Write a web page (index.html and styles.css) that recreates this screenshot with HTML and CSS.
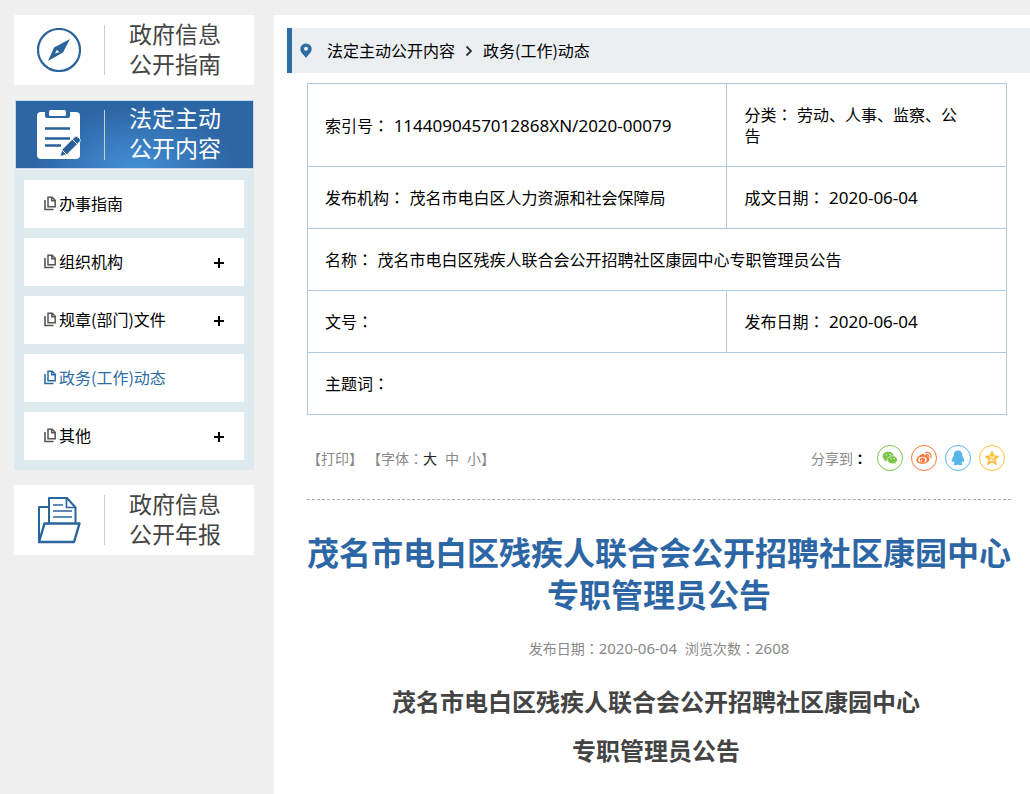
FILE: index.html
```html
<!DOCTYPE html>
<html lang="zh-CN">
<head>
<meta charset="utf-8">
<meta name="viewport" content="width=device-width, initial-scale=1">
<title>茂名市电白区残疾人联合会公开招聘社区康园中心专职管理员公告</title>
<link rel="stylesheet" href="styles.css">
</head>
<body>
<svg class="sprite" aria-hidden="true">
  <symbol id="pages" viewBox="0 0 13 15">
    <path d="M1 4v9.500h8.500" fill="none" stroke="currentColor" stroke-width="1.600"/>
    <path d="M4 1.300h4.200l3 3v6.500H4zM7.800 1.300v3.400h3.400" fill="none" stroke="currentColor" stroke-width="1.500"/>
  </symbol>
</svg>
<div class="page">
  <aside class="sidebar">
    <a class="card" href="#guide">
      <svg class="card-icon" viewBox="0 0 44 44" aria-hidden="true">
        <circle cx="22" cy="22" r="21" fill="none" stroke="#2a649c" stroke-width="2.200"/>
        <path fill="#2a649c" fill-rule="evenodd" d="M33 11 26 24.500 11 33l6-13.500zM20.500 20.800 18 25.600l4.800-1.700z"/>
        <path fill="#2a649c" d="m18.500 20.500 5 4.500 1-2-4-3.500z"/>
      </svg>
      <span class="card-text">政府信息<br>公开指南</span>
    </a>
    <section>
      <a class="card active" href="#content">
        <svg class="card-icon tall" viewBox="0 0 44 50" aria-hidden="true">
          <rect x="0" y="2" width="43" height="47" rx="4" fill="#fff"/>
          <path fill="#2d66a5" d="M8 2h25v4q0 2-2 2H10q-2 0-2-2z"/>
          <rect x="12" y="0" width="17" height="6" rx="1.500" fill="#fff"/>
          <path d="M8 18.500h25M8 28.500h25M8 35.500h16" stroke="#2a6098" stroke-width="2.600"/>
          <path fill="#2a6098" stroke="#fff" stroke-width=".8" d="m23 46.500 2-7L37.500 27q2-1.500 4 .5l1.500 1.500q1 2-.5 3L30 44.500z"/>
          <path d="m35 29 5.500 5.500M25 40l4 4" stroke="#fff"/>
        </svg>
        <span class="card-text">法定主动<br>公开内容</span>
      </a>
      <ul class="submenu">
        <li><a href="#a"><svg class="pages"><use href="#pages"/></svg>办事指南</a></li>
        <li><a href="#b"><svg class="pages"><use href="#pages"/></svg>组织机构</a><button class="plus" aria-label="展开组织机构"></button></li>
        <li><a href="#c"><svg class="pages"><use href="#pages"/></svg>规章(部门)文件</a><button class="plus" aria-label="展开规章文件"></button></li>
        <li><a class="current" href="#d"><svg class="pages"><use href="#pages"/></svg>政务(工作)动态</a></li>
        <li><a href="#e"><svg class="pages"><use href="#pages"/></svg>其他</a><button class="plus" aria-label="展开其他"></button></li>
      </ul>
    </section>
    <a class="card" href="#report">
      <svg class="card-icon tall" viewBox="0 0 44 50" aria-hidden="true">
        <g fill="none" stroke="#2a649c" stroke-width="2" stroke-linejoin="round">
          <path d="M11 12H2v34.500M12 28V3h18l8.500 9.500V28"/>
          <path d="M7.500 28.500H42.500L37 47H2z" stroke-width="2.400"/>
          <path d="M29.500 3v9.500h9M16 10h10M16 16h19M16 22h19" stroke-width="1.700"/>
        </g>
      </svg>
      <span class="card-text">政府信息<br>公开年报</span>
    </a>
  </aside>

  <main class="main">
    <nav class="crumbs" aria-label="当前位置">
      <svg class="pin" viewBox="0 0 12 16" aria-hidden="true"><path fill="#2e6da4" fill-rule="evenodd" d="M6 .500a5.600 5.600 0 0 1 5.700 5.600C11.700 9.500 8.500 11.500 6 15 3.500 11.500.300 9.500.300 6.100A5.600 5.600 0 0 1 6 .500zm0 3.300a2 2 0 1 0 0 4 2 2 0 0 0 0-4z"/></svg>
      <a href="#content">法定主动公开内容</a>
      <svg class="chevron" viewBox="0 0 8 12" aria-hidden="true"><path d="m1.500 1.500 4.500 4.500-4.500 4.500" fill="none" stroke="#333" stroke-width="1.800"/></svg>
      <a href="#d">政务(工作)动态</a>
    </nav>

    <article class="article">
      <table class="info">
        <colgroup><col class="col-wide"><col></colgroup>
        <tr><td>索引号<span class="colon" lang="ja">：</span> <span class="num">1144090457012868XN/2020-00079</span></td><td>分类<span class="colon" lang="ja">：</span> 劳动、人事、监察、公告</td></tr>
        <tr><td>发布机构<span class="colon" lang="ja">：</span> 茂名市电白区人力资源和社会保障局</td><td>成文日期<span class="colon" lang="ja">：</span> <span class="num">2020-06-04</span></td></tr>
        <tr><td colspan="2">名称<span class="colon" lang="ja">：</span> 茂名市电白区残疾人联合会公开招聘社区康园中心专职管理员公告</td></tr>
        <tr><td>文号<span class="colon" lang="ja">：</span></td><td>发布日期<span class="colon" lang="ja">：</span> <span class="num">2020-06-04</span></td></tr>
        <tr><td colspan="2">主题词<span class="colon" lang="ja">：</span></td></tr>
      </table>

      <div class="tools">
        <div class="tool-group">
          <span>【<button>打印</button>】</span>
          <span class="sizes">【字体<span class="colon" lang="ja">：</span><button class="chosen">大</button><button>中</button><button>小</button>】</span>
        </div>
        <div class="share">
          <span>分享到<b class="colon" lang="ja">：</b></span>
          <a class="round wechat" href="#wechat" aria-label="微信"><svg viewBox="0 0 20 20"><g fill="currentColor"><path d="M8 3C4.400 3 1.800 5.200 1.800 8c0 1.700 1 3 2.200 3.900l-.5 1.900 2.300-1.100c.7.200 1.400.3 2.200.3 3.600 0 6.200-2.200 6.200-5S11.600 3 8 3z"/><path stroke="#fff" stroke-width=".7" d="M12.700 7.500c-3.200 0-5.500 2-5.500 4.500s2.300 4.500 5.500 4.500c.7 0 1.300-.1 1.900-.3l2.200 1-.6-1.900c1.200-.8 2-2 2-3.300 0-2.500-2.400-4.500-5.500-4.500z"/></g><g fill="#fff"><circle cx="6" cy="6.500" r=".8"/><circle cx="10" cy="6" r=".8"/><circle cx="11" cy="10.800" r=".7"/><circle cx="14.500" cy="10.800" r=".7"/></g></svg></a>
          <a class="round weibo" href="#weibo" aria-label="微博"><svg viewBox="0 0 20 20"><path fill="currentColor" d="M8 5.500c1.500-.7 2.800-.2 2.600 1.600 2.400-.8 4-.1 3.500 1.700 1.300.4 2 1.200 2 2.400 0 2.900-3.500 5.300-7.500 5.300S1.500 14.800 1.500 12.200C1.500 9.800 5 6.700 8 5.500z"/><ellipse cx="8.400" cy="12" rx="4.800" ry="3.300" fill="#fff"/><circle cx="8.300" cy="12.300" r="2.900" fill="currentColor"/><circle cx="7.300" cy="12.900" r="1" fill="#fff"/><path d="M12 3.800c3.800-.7 6.500 2 5.800 5.700M12.500 6.300c1.900-.4 3.100.9 2.800 2.500" fill="none" stroke="currentColor" stroke-width="1.300" stroke-linecap="round"/></svg></a>
          <a class="round qq" href="#qq" aria-label="QQ"><svg viewBox="0 0 20 20"><path fill="currentColor" d="M10 1.800c-3 0-4.700 2-4.700 5 0 1-.2 1.600-.8 2.500-1.100 1.600-1.700 3.300-1.300 5 .3.500 1 .1 1.800-1 .2 1 .7 1.800 1.300 2.400-1.100.4-1.500 1.300-.9 1.800.8.600 3 .6 4.600-.2 1.600.8 3.800.8 4.600.2.600-.5.200-1.400-.9-1.800.6-.6 1.100-1.400 1.300-2.400.8 1.100 1.500 1.500 1.800 1 .4-1.700-.2-3.400-1.300-5-.6-.9-.8-1.500-.8-2.500 0-3-1.700-5-4.700-5z"/></svg></a>
          <a class="round qzone" href="#qzone" aria-label="QQ空间"><svg viewBox="0 0 20 20"><path fill="currentColor" stroke="currentColor" stroke-linejoin="round" d="m10 2.500 2.300 5 5.500.6-4.200 3.700 1.300 5.500-4.900-2.900-4.900 2.900 1.300-5.500L2.200 8.100l5.500-.6z"/><path d="M7 9q3-.6 5.600 0L7.600 12.600q3 .5 5.500-.1" fill="none" stroke="#fff" stroke-width="1"/></svg></a>
        </div>
      </div>

      <h1 class="title">茂名市电白区残疾人联合会公开招聘社区康园中心专职管理员公告</h1>
      <p class="meta"><span>发布日期<span class="colon" lang="ja">：</span><span class="num">2020-06-04</span></span><span>浏览次数<span class="colon" lang="ja">：</span><span class="num">2608</span></span></p>
      <div class="body-text">
        <p>茂名市电白区残疾人联合会公开招聘社区康园中心</p>
        <p>专职管理员公告</p>
      </div>
    </article>
  </main>
</div>
</body>
</html>
```
FILE: styles.css
```css
* { box-sizing: border-box; }
body {
  margin: 0;
  background: #f0f0f0;
  color: #000;
  font: 16px/21px "Noto Sans CJK SC", sans-serif;
  text-spacing-trim: space-all;
}
a { color: inherit; text-decoration: none; }
button {
  padding: 0;
  border: 0;
  background: none;
  color: inherit;
  font: inherit;
  cursor: pointer;
}
p, ul, h1 { margin: 0; padding: 0; }
svg { display: block; flex: none; }
.sprite { position: absolute; width: 0; height: 0; }
.colon { font-family: "Noto Sans CJK JP", sans-serif; }
.num { font-family: "Noto Sans", sans-serif; font-size: 17px; }

.page {
  display: flex;
  gap: 20px;
  min-height: 100vh;
  padding: 15px 0 0 14px;
}

/* Sidebar */
.sidebar {
  display: flex;
  flex-direction: column;
  gap: 15px;
  flex: none;
  width: 240px;
}
.card {
  display: flex;
  align-items: center;
  height: 70px;
  padding-left: 23px;
  background: #fff;
  color: #444;
}
.card-icon { width: 44px; height: 44px; }
.card-icon.tall { height: 50px; }
.card-text {
  display: flow-root;
  margin-left: 23px;
  padding: 0 0 5px 25px;
  background: linear-gradient(#ccc, #ccc) left center / 1px 50px no-repeat;
  font-size: 23px;
  line-height: 30px;
}
.card.active {
  height: 69px;
  margin: 0 0 1px 1px;
  padding-left: 21px;
  border: 1px solid #c3d8ea;
  background: radial-gradient(ellipse 100px 60px at 50% 100%, #438fd5, #2d66a5);
  color: #fff;
}
.submenu {
  display: flex;
  flex-direction: column;
  gap: 10px;
  padding: 10px;
  background: #dfeaee;
  list-style: none;
}
.submenu li {
  display: flex;
  align-items: center;
  justify-content: space-between;
  height: 48px;
  padding: 0 20px 2px;
  background: #fff;
}
.submenu a { display: flex; align-items: center; gap: 2px; }
.submenu .current { color: #2e6da4; }
.pages { width: 13px; height: 15px; color: #555; }
.current .pages { color: #2e6da4; }
.plus {
  width: 10px;
  height: 14px;
  background:
    linear-gradient(#000, #000) center 8px / 10px 2px no-repeat,
    linear-gradient(#000, #000) center bottom / 2px 10px no-repeat;
}

/* Main column */
.main {
  flex: 1;
  min-width: 0;
  padding: 13px 0 0 13px;
  background: #fff;
}
.crumbs {
  display: flex;
  align-items: center;
  height: 45px;
  padding-left: 8px;
  border-left: 5px solid #2e6da4;
  background: #ebeff2;
}
.pin { width: 12px; height: 16px; margin-right: 15px; }
.chevron { width: 8px; height: 12px; margin: 0 10px; }
.article { padding: 10px 19px 20px 20px; }

.info {
  width: calc(100% - 4px);
  border-collapse: collapse;
  table-layout: fixed;
}
.col-wide { width: 60%; }
.info td {
  padding: 20px 40px 20px 17px;
  border: 1px solid #afcae3;
}
.info .colon { margin-right: 1px; }

.tools {
  display: flex;
  align-items: center;
  justify-content: space-between;
  height: 85px;
  padding: 2px 6px 0 0;
  border-bottom: 1px dashed #aaa;
  color: #888;
  font-size: 14px;
}
.tool-group { display: flex; gap: 4px; }
.sizes { display: flex; }
.sizes button + button { margin-left: 8px; }
.chosen { color: #222; }
.share { display: flex; align-items: center; gap: 8px; }
.share .colon { margin-right: 2px; color: #000; }
.round {
  display: grid;
  place-items: center;
  width: 26px;
  height: 26px;
  border: 1px solid currentColor;
  border-radius: 50%;
}
.round svg { width: 18px; height: 18px; }
.wechat { color: #7bc549; }
.weibo { color: #ff763b; }
.qq { color: #56b6e7; }
.qzone { color: #fdbe3d; }

.title {
  padding-top: 30px;
  color: #2d66a5;
  font-size: 32px;
  line-height: 42px;
  text-align: center;
}
.meta {
  display: flex;
  justify-content: center;
  gap: 8px;
  padding: 24px 0 17px;
  color: #888;
  font-size: 14px;
}
.meta .num { font-size: 15px; }
.body-text {
  padding-right: 6px;
  color: #444;
  font-size: 24px;
  font-weight: bold;
  line-height: 49px;
  text-align: center;
}
```
